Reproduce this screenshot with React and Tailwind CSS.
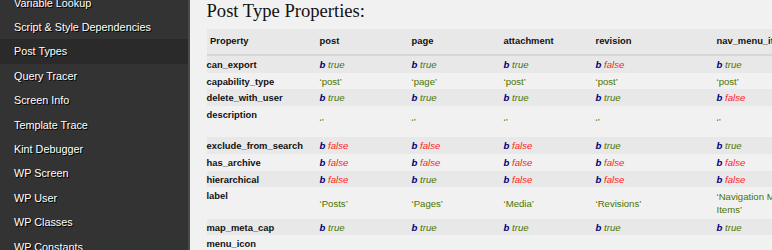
const menu = [
  "Variable Lookup",
  "Script & Style Dependencies",
  "Post Types",
  "Query Tracer",
  "Screen Info",
  "Template Trace",
  "Kint Debugger",
  "WP Screen",
  "WP User",
  "WP Classes",
  "WP Constants",
];

const T = { t: "b", v: true };
const F = { t: "b", v: false };
const s = (v) => ({ t: "s", v });

const rows = [
  { name: "can_export", vals: [T, T, T, F, T] },
  { name: "capability_type", vals: [s("post"), s("page"), s("post"), s("post"), s("post")] },
  { name: "delete_with_user", vals: [T, T, T, T, F] },
  { name: "description", tall: true, vals: [s(""), s(""), s(""), s(""), s("")] },
  { name: "exclude_from_search", vals: [F, F, F, T, T] },
  { name: "has_archive", vals: [F, F, F, F, F] },
  { name: "hierarchical", vals: [F, T, F, F, F] },
  { name: "label", tall: true, vals: [s("Posts"), s("Pages"), s("Media"), s("Revisions"), s("Navigation Menu Items")] },
  { name: "map_meta_cap", vals: [T, T, T, T, T] },
  { name: "menu_icon", vals: [] },
];

const cols = ["post", "page", "attachment", "revision", "nav_menu_item"];
const widths = ["w-[92px]", "w-[92px]", "w-[92px]", "w-[121px]", "w-[80px]"];

const Value = ({ val }) => {
  if (!val) return null;
  if (val.t === "b") {
    return (
      <span className="italic">
        <b className="text-[#00007a]">b</b>{" "}
        <span className={val.v ? "text-[#4b7300]" : "text-[#ff1a1a]"}>
          {val.v ? "true" : "false"}
        </span>
      </span>
    );
  }
  return <span className="text-[#4b7300]">‘{val.v}’</span>;
};

export default function App() {
  return (
    <div className="flex h-[250px] w-[772px] overflow-hidden bg-[#f1f1f1] font-['Liberation_Sans',Arial,sans-serif]">
      {/* Sidebar */}
      <div className="w-[190px] shrink-0 bg-[#333333] border-r-2 border-[#4a4a4a]">
        <ul className="-mt-[9.5px]">
          {menu.map((m) => (
            <li
              key={m}
              className={`flex h-[24.4px] items-center pl-[14px] text-[10.8px] text-white [text-shadow:1px_1px_0_#000] ${
                m === "Post Types" ? "bg-[#2a2a2a]" : ""
              }`}
            >
              {m}
            </li>
          ))}
        </ul>
      </div>

      {/* Main */}
      <div className="min-w-0 flex-1 pl-[16.5px]">
        <h1 className="font-['Liberation_Serif','Times_New_Roman',serif] text-[18.6px] leading-[20px] text-[#111] pt-[0.5px]">
          Post Type Properties:
        </h1>

        <div className="mt-[8.5px] w-[700px] text-[9.4px] text-[#111]">
          {/* Header */}
          <div className="flex h-[27px] items-center bg-[#e8e8e8] border-b-2 border-[#d6d6d6] font-bold">
            <div className="w-[113px] shrink-0 pl-[3.5px]">Property</div>
            {cols.map((c, i) => (
              <div key={c} className={`${widths[i]} shrink-0 whitespace-nowrap`}>
                {c}
              </div>
            ))}
          </div>

          {rows.map((r, idx) => (
            <div
              key={r.name}
              className={`flex ${r.tall ? "h-[31.3px]" : "h-[16.7px]"} ${
                idx % 2 === 0 ? "bg-[#e8e8e8]" : "bg-[#f1f1f1]"
              }`}
            >
              <div
                className={`w-[113px] shrink-0 font-bold leading-[13px] ${
                  r.tall ? "pt-[1.5px]" : "flex items-center"
                }`}
              >
                {r.name}
              </div>
              {cols.map((c, i) => (
                <div
                  key={c}
                  className={`${widths[i]} shrink-0 flex items-center leading-[13px] text-[9.6px] pr-[2px]`}
                >
                  <Value val={r.vals[i]} />
                </div>
              ))}
            </div>
          ))}
        </div>
      </div>
    </div>
  );
}
